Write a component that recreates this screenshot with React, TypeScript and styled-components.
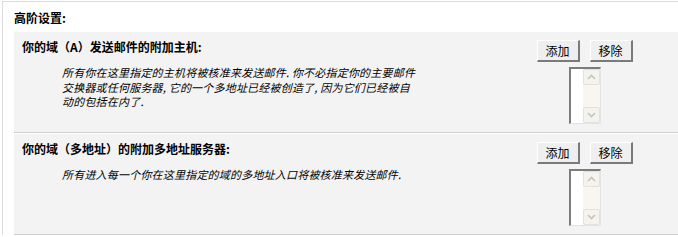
import React from 'react';
import styled, { createGlobalStyle } from 'styled-components';

const GlobalStyle = createGlobalStyle`
  html, body {
    margin: 0;
    padding: 0;
    background: #ffffff;
  }
  body {
    font-family: "Noto Sans CJK SC", "DejaVu Sans", sans-serif;
    color: #000000;
  }
`;

interface SectionData {
  id: string;
  title: string;
  lines: string[];
}

const sections: SectionData[] = [
  {
    id: 'hosts',
    title: '你的域（A）发送邮件的附加主机:',
    lines: [
      '所有你在这里指定的主机将被核准来发送邮件. 你不必指定你的主要邮件',
      '交换器或任何服务器, 它的一个多地址已经被创造了, 因为它们已经被自',
      '动的包括在内了.',
    ],
  },
  {
    id: 'mx',
    title: '你的域（多地址）的附加多地址服务器:',
    lines: ['所有进入每一个你在这里指定的域的多地址入口将被核准来发送邮件.'],
  },
];

const Chevron: React.FC<{ up?: boolean }> = ({ up }) => (
  <svg width="9" height="6" viewBox="0 0 9 6">
    <path
      d={up ? 'M1 5 L4.5 1.5 L8 5' : 'M1 1 L4.5 4.5 L8 1'}
      fill="none"
      stroke="#c4c4bc"
      strokeWidth="1.6"
    />
  </svg>
);

const App: React.FC = () => {
  return (
    <>
      <GlobalStyle />
      <Frame>
        <Heading>高阶设置:</Heading>
        {sections.map((s) => (
          <Section key={s.id}>
            <Info>
              <Title>{s.title}</Title>
              <Desc>
                {s.lines.map((line, i) => (
                  <DescLine key={`${s.id}-${i}`}>{line}</DescLine>
                ))}
              </Desc>
            </Info>
            <Controls>
              <ButtonRow>
                <Button>添加</Button>
                <Button>移除</Button>
              </ButtonRow>
              <ListBox>
                <ListArea />
                <ScrollBar>
                  <ScrollButton>
                    <Chevron up />
                  </ScrollButton>
                  <ScrollTrack />
                  <ScrollButton>
                    <Chevron />
                  </ScrollButton>
                </ScrollBar>
              </ListBox>
            </Controls>
          </Section>
        ))}
      </Frame>
    </>
  );
};

export default App;

const Frame = styled.div`
  margin: 1px 0 0 2px;
  border-top: 1px solid #dcdcdc;
  border-left: 1px solid #dcdcdc;
  padding-left: 11px;
  width: 665px;
`;

const Heading = styled.div`
  height: 30px;
  display: flex;
  align-items: center;
  font-size: 12px;
  font-weight: 700;
  padding-top: 0;
`;

const Section = styled.div`
  display: flex;
  height: 93px;
  padding-top: 7px;
  background: #f3f3f3;
  border-bottom: 1px solid #cfcfcf;
  margin-bottom: 1px;
`;

const Info = styled.div`
  flex: 1;
  padding-left: 8px;
`;

const Title = styled.div`
  font-size: 12px;
  font-weight: 700;
  line-height: 16px;
`;

const Desc = styled.div`
  margin-top: 10px;
  padding-left: 40px;
  font-size: 11px;
  font-style: italic;
  line-height: 14.5px;
  letter-spacing: 0.2px;
`;

const DescLine = styled.div`
  white-space: nowrap;
`;

const Controls = styled.div`
  width: 95px;
  margin-right: 47px;
  display: flex;
  flex-direction: column;
  align-items: center;
  padding-top: 1px;
`;

const ButtonRow = styled.div`
  display: flex;
  gap: 10px;
`;

const Button = styled.button`
  width: 43px;
  height: 22px;
  padding: 0;
  background: #efefef;
  border-top: 1px solid #ffffff;
  border-left: 1px solid #ffffff;
  border-right: 2px solid #7a7a7a;
  border-bottom: 2px solid #7a7a7a;
  font-family: "Noto Sans CJK SC", "DejaVu Sans", sans-serif;
  font-size: 12px;
  color: #000;
  line-height: 18px;
`;

const ListBox = styled.div`
  margin-top: 5px;
  width: 32px;
  height: 57px;
  display: flex;
  box-sizing: border-box;
  border-top: 2px solid #7c7c7c;
  border-left: 2px solid #7c7c7c;
  border-right: 1px solid #e4e4e4;
  border-bottom: 1px solid #e4e4e4;
  background: #ffffff;
`;

const ListArea = styled.div`
  flex: 1;
`;

const ScrollBar = styled.div`
  width: 17px;
  display: flex;
  flex-direction: column;
  background: #f7f6f1;
`;

const ScrollButton = styled.div`
  height: 16px;
  box-sizing: border-box;
  border: 1px solid #e2e1da;
  border-radius: 2px;
  background: #f4f3ee;
  display: flex;
  align-items: center;
  justify-content: center;
`;

const ScrollTrack = styled.div`
  flex: 1;
`;
